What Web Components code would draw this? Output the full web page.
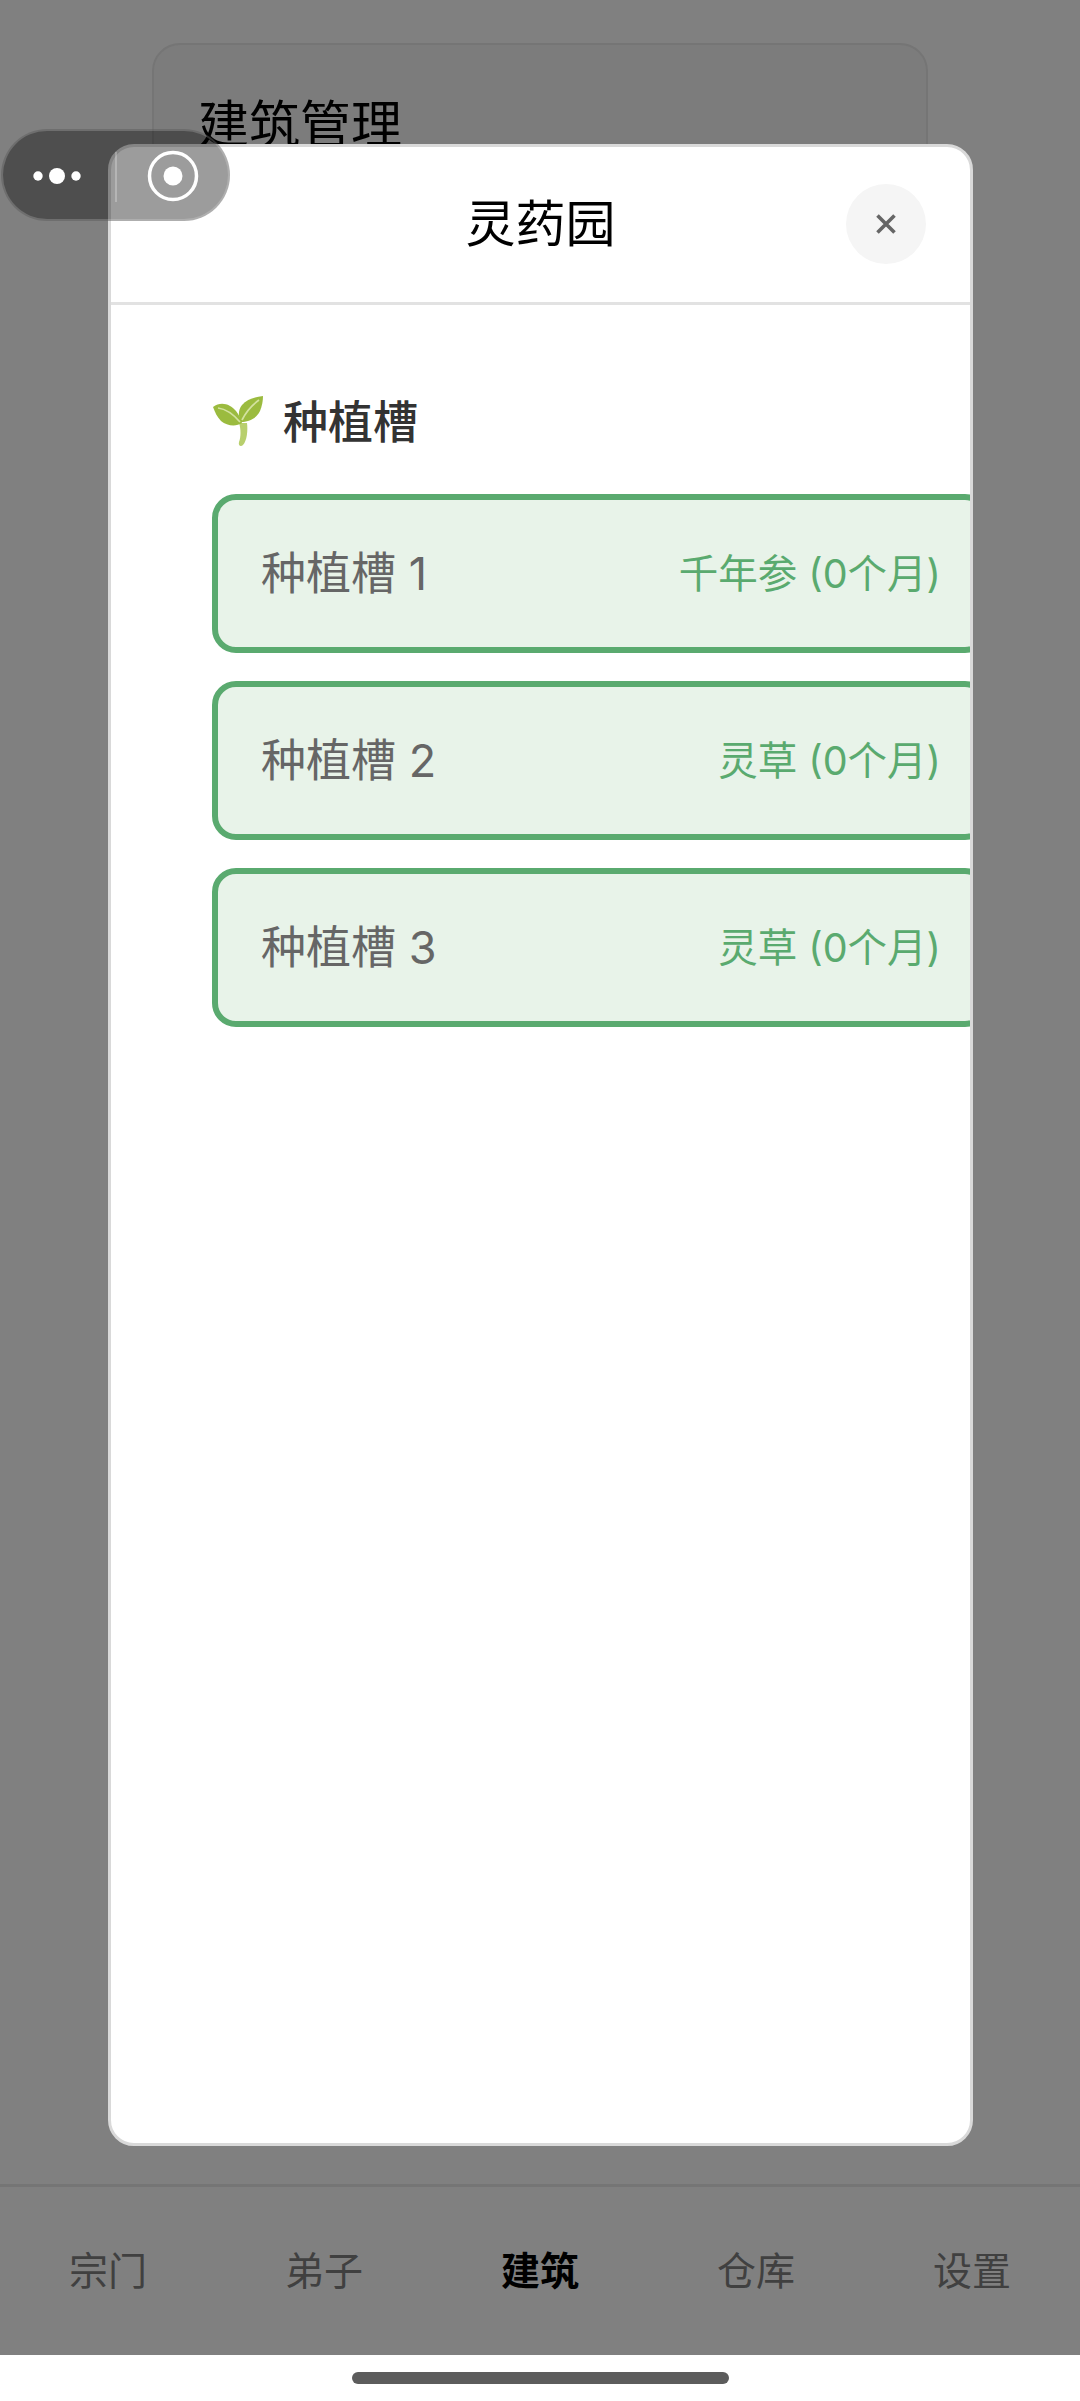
<!DOCTYPE html>
<html lang="zh">
<head>
<meta charset="utf-8">
<title>灵药园</title>
<style>
  html, body { margin: 0; padding: 0; background: #fff; }
  body { font-family: "Noto Sans CJK SC", "Noto Sans", sans-serif; }
</style>
</head>
<body>
<game-app>
  <span slot="title">建筑管理</span>
  <tab-bar slot="tabs"></tab-bar>
  <herb-modal slot="overlay" heading="灵药园">
    <section-title>种植槽</section-title>
    <plant-row label="种植槽 1" crop="千年参 (0个月)"></plant-row>
    <plant-row label="种植槽 2" crop="灵草 (0个月)"></plant-row>
    <plant-row label="种植槽 3" crop="灵草 (0个月)"></plant-row>
  </herb-modal>
  <capsule-button slot="overlay"></capsule-button>
</game-app>

<script>
class GameApp extends HTMLElement {
  connectedCallback() {
    this.attachShadow({ mode: 'open' });
    this.shadowRoot.innerHTML = `
      <style>
        :host {
          display: flex;
          flex-direction: column;
          position: relative;
          width: 1080px;
          height: 2401px;
          overflow: hidden;
          background: #fff;
        }
        .screen {
          flex: 1;
          display: flex;
          flex-direction: column;
          background: #808080;
        }
        .main {
          flex: 1;
          padding: 43px 152px 0;
        }
        .card {
          height: 400px;
          box-sizing: border-box;
          padding: 44px 44px;
          background: #7c7c7c;
          border: 2px solid #757575;
          border-radius: 28px;
          font-size: 51px;
          line-height: 64px;
          color: #000;
        }
        .home {
          height: 46px;
          display: flex;
          justify-content: center;
          padding-top: 17px;
          box-sizing: border-box;
        }
        .home i {
          display: block;
          width: 377px;
          height: 12px;
          border-radius: 6px;
          background: #5c5c5c;
        }
      </style>
      <div class="screen">
        <div class="main"><div class="card"><slot name="title"></slot></div></div>
        <slot name="tabs"></slot>
      </div>
      <div class="home"><i></i></div>
      <slot name="overlay"></slot>
    `;
  }
}

class TabBar extends HTMLElement {
  connectedCallback() {
    this.attachShadow({ mode: 'open' });
    const tabs = ['宗门', '弟子', '建筑', '仓库', '设置'];
    this.shadowRoot.innerHTML = `
      <style>
        :host {
          display: grid;
          grid-template-columns: repeat(5, 1fr);
          height: 171px;
          box-sizing: border-box;
          border-top: 3px solid #757575;
          padding-bottom: 6px;
          background: #808080;
        }
        div {
          display: flex;
          align-items: center;
          justify-content: center;
          font-size: 39px;
          color: #404040;
        }
        .active { color: #000; font-weight: 700; }
      </style>
      ${tabs.map(t => `<div class="${t === '建筑' ? 'active' : ''}">${t}</div>`).join('')}
    `;
  }
}

class HerbModal extends HTMLElement {
  connectedCallback() {
    this.attachShadow({ mode: 'open' });
    this.shadowRoot.innerHTML = `
      <style>
        :host {
          display: flex;
          flex-direction: column;
          position: absolute;
          left: 108px;
          top: 144px;
          width: 865px;
          height: 2002px;
          box-sizing: border-box;
          border: 3px solid #d9d9d9;
          border-radius: 26px;
          background: #fff;
          overflow: hidden;
        }
        header {
          position: relative;
          height: 158px;
          flex: none;
          display: flex;
          align-items: center;
          justify-content: center;
          padding-bottom: 10px;
          box-sizing: border-box;
          border-bottom: 3px solid #e2e2e2;
          font-size: 50px;
          color: #000;
        }
        .close {
          position: absolute;
          left: 735px;
          top: 37px;
          width: 80px;
          height: 80px;
          border-radius: 50%;
          background: #f5f5f5;
          display: flex;
          align-items: center;
          justify-content: center;
        }
        .body {
          flex: 1;
          display: flex;
          flex-direction: column;
          gap: 28px;
          padding: 92px 0 0 101px;
        }
      </style>
      <header>
        <span>${this.getAttribute('heading')}</span>
        <div class="close">
          <svg width="22" height="22" viewBox="0 0 22 22">
            <path d="M2.5 2.5 L19.5 19.5 M19.5 2.5 L2.5 19.5" stroke="#666" stroke-width="3.6" fill="none"/>
          </svg>
        </div>
      </header>
      <div class="body"><slot></slot></div>
    `;
  }
}

class SectionTitle extends HTMLElement {
  connectedCallback() {
    this.attachShadow({ mode: 'open' });
    this.shadowRoot.innerHTML = `
      <style>
        :host {
          display: flex;
          align-items: center;
          gap: 19px;
          height: 54px;
          margin-bottom: 15px;
          font-size: 45px;
          font-weight: 500;
          color: #333;
        }
        svg { display: block; flex: none; margin-top: -4px; }
        span { padding-bottom: 9px; }
      </style>
      <svg width="52" height="52" viewBox="0 0 52 52">
        <path d="M27 27 C29 33 29 41 27 46 C26 50 29 51 31 49 C35 45 36 34 35 27 Z" fill="#b8cf6d"/>
        <path d="M1 11 C9 5 18 8 24 15 C27 19 29 23 30 27 C24 31 15 30 9 25 C5 21 3 16 1 11 Z" fill="#9bbb3f"/>
        <path d="M51 0 C43 1 35 3 30 9 C26 14 26 20 29 26 C36 26 44 23 48 15 C50 10 51 5 51 0 Z" fill="#9bbb3f"/>
        <path d="M6 12 C14 13 22 19 28 26" stroke="#d3e2a0" stroke-width="1.7" fill="none"/>
        <path d="M47 4 C40 9 34 16 30 24" stroke="#d3e2a0" stroke-width="1.7" fill="none"/>
      </svg>
      <span><slot></slot></span>
    `;
  }
}

class PlantRow extends HTMLElement {
  connectedCallback() {
    this.attachShadow({ mode: 'open' });
    this.shadowRoot.innerHTML = `
      <style>
        :host {
          display: flex;
          align-items: center;
          justify-content: space-between;
          flex: none;
          width: 777px;
          height: 159px;
          box-sizing: border-box;
          padding: 0 42px 6px 43px;
          border: 6px solid #5aaa6f;
          border-radius: 24px;
          background: #e8f3e9;
          font-family: Inter, "Noto Sans CJK SC", sans-serif;
        }
        .label { font-size: 45px; color: #666; }
        .crop { font-size: 39.5px; color: #5aaa6f; }
      </style>
      <span class="label">${this.getAttribute('label')}</span>
      <span class="crop">${this.getAttribute('crop')}</span>
    `;
  }
}

class CapsuleButton extends HTMLElement {
  connectedCallback() {
    this.attachShadow({ mode: 'open' });
    this.shadowRoot.innerHTML = `
      <style>
        :host {
          display: block;
          position: absolute;
          left: 1px;
          top: 129px;
          width: 229px;
          height: 92px;
          box-sizing: border-box;
          border: 2px solid rgba(255, 255, 255, 0.18);
          border-radius: 46px;
          background: rgba(0, 0, 0, 0.39);
        }
        svg { position: absolute; left: -3px; top: -3px; }
      </style>
      <svg width="235" height="98" viewBox="0 0 235 98">
        <circle cx="38" cy="48" r="4.7" fill="#fff"/>
        <circle cx="57" cy="48" r="8" fill="#fff"/>
        <circle cx="76" cy="48" r="4.7" fill="#fff"/>
        <rect x="115" y="24" width="2" height="50" fill="rgba(255,255,255,0.25)"/>
        <circle cx="173" cy="48" r="23.5" fill="none" stroke="#fff" stroke-width="3.5"/>
        <circle cx="173" cy="48" r="9.5" fill="#fff"/>
      </svg>
    `;
  }
}

customElements.define('game-app', GameApp);
customElements.define('tab-bar', TabBar);
customElements.define('herb-modal', HerbModal);
customElements.define('section-title', SectionTitle);
customElements.define('plant-row', PlantRow);
customElements.define('capsule-button', CapsuleButton);
</script>
</body>
</html>
